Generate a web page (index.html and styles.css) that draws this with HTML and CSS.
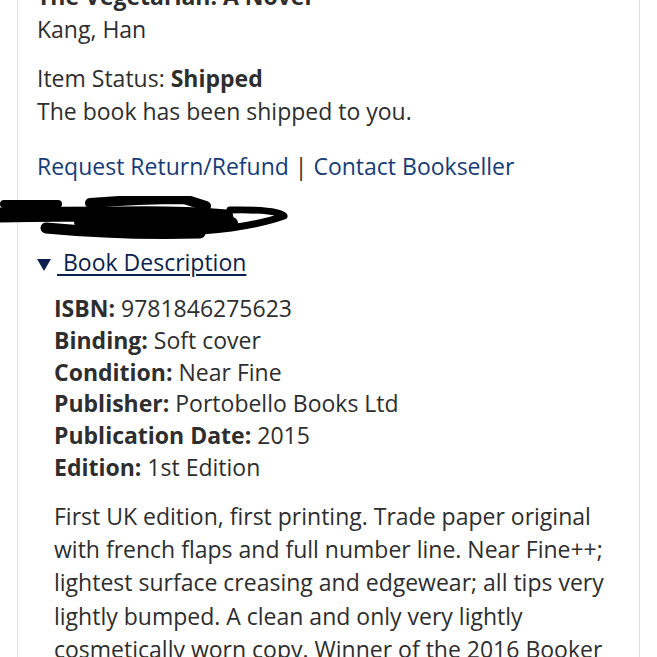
FILE: index.html
```html
<!DOCTYPE html>
<html lang="en">
<head>
    <meta charset="UTF-8">
    <meta name="viewport" content="width=device-width, initial-scale=1.0">
    <title>Order Item</title>
    <link rel="stylesheet" href="styles.css">
</head>
<body>
    <div class="card">
        <div class="title">The Vegetarian: A Novel</div>
        <div class="author">Kang, Han</div>

        <div class="status">
            <div>Item Status: <b>Shipped</b></div>
            <div>The book has been shipped to you.</div>
        </div>

        <div class="actions">
            <a href="#">Request Return/Refund</a> | <a href="#">Contact Bookseller</a>
        </div>

        <!-- seller name scribbled out -->
        <svg class="redact" width="300" height="44" viewBox="0 0 300 44">
            <g fill="none" stroke="#000" stroke-linecap="round" stroke-linejoin="round">
                <path d="M4 8 L58 8" stroke-width="8"/>
                <path d="M90 7 Q140 3 184 3 L206 10" stroke-width="10"/>
                <path d="M-4 19 Q60 18 120 18 Q180 17 226 21" stroke-width="15"/>
                <path d="M46 32 Q120 39 200 37" stroke-width="11"/>
                <path d="M120 37 Q230 39 284 20 Q280 13 230 14" stroke-width="7"/>
                <path d="M80 26 Q150 29 232 27" stroke-width="12"/>
            </g>
        </svg>

        <div class="toggle">
            <svg class="arrow" width="14" height="12" viewBox="0 0 14 12"><path d="M0 0 H14 L7 12 Z" fill="#0d1f4f"/></svg><a href="#" class="toggle-link"> Book Description</a>
        </div>

        <div class="details">
            <ul class="specs">
                <li><b>ISBN:</b> 9781846275623</li>
                <li><b>Binding:</b> Soft cover</li>
                <li><b>Condition:</b> Near Fine</li>
                <li><b>Publisher:</b> Portobello Books Ltd</li>
                <li><b>Publication Date:</b> 2015</li>
                <li><b>Edition:</b> 1st Edition</li>
            </ul>
            <p class="desc">First UK edition, first printing. Trade paper original with french flaps and full number line. Near Fine++; lightest surface creasing and edgewear; all tips very lightly bumped. A clean and only very lightly cosmetically worn copy. Winner of the 2016 Booker International Prize.</p>
        </div>
    </div>
</body>
</html>
```

FILE: styles.css
```css
body {
    font-family: "Open Sans", sans-serif;
    font-size: 23px;
    line-height: 33px;
    color: #2e2e2e;
    margin: 0;
    background-color: #ffffff;
    overflow: hidden;
}
.card {
    margin: -20px 17px 0;
    padding: 0 19px 40px;
    border: 1px solid #dedede;
    border-top: none;
}
.title {
    font-weight: bold;
}
.status {
    margin-top: 16px;
}
.actions {
    margin-top: 22px;
}
.actions a {
    color: #163c78;
    text-decoration: none;
}
.redact {
    display: block;
    margin: 13px 0 0 -37px;
}
.toggle {
    margin-top: 6px;
    color: #0d1f4f;
}
.arrow {
    margin-right: 6px;
}
.toggle-link {
    color: #0d1f4f;
    text-decoration: underline;
    text-underline-offset: 3px;
}
.details {
    padding-left: 17px;
}
.specs {
    list-style: none;
    margin: 14px 0 0;
    padding: 0;
    line-height: 31.8px;
}
.desc {
    margin: 16px 0 0;
    line-height: 33.3px;
}
```
